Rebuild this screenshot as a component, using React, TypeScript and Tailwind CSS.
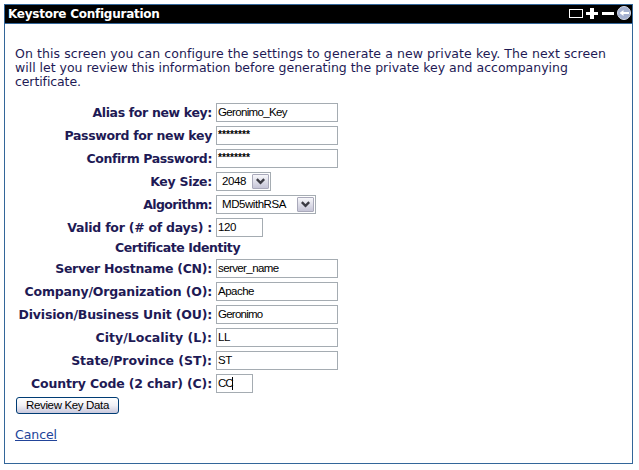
import type { ReactNode } from "react";

const ui = "font-['Liberation_Sans',Arial,sans-serif]";

function Row({ label, spacing, children }: { label: string; spacing: string; children: ReactNode }) {
  return (
    <div className="flex h-[19px] items-center">
      <label className="w-[197px] shrink-0 text-right font-bold leading-[19px]">
        <span className={`whitespace-nowrap ${spacing}`}>{label}</span>
      </label>
      <div className="ml-1 flex">{children}</div>
    </div>
  );
}

function Field({ value, width = "w-[122px]", spacing = "tracking-[-0.65px]", caret = false }: { value: string; width?: string; spacing?: string; caret?: boolean }) {
  return (
    <div className={`flex h-[19px] items-center border border-[#a5acb2] bg-white pl-px text-[11.5px] leading-[17px] text-black ${ui} ${width} ${spacing}`}>
      <span>{value}</span>
      {caret && <span className="h-[13px] w-px bg-black" />}
    </div>
  );
}

function Password() {
  return (
    <div className={`h-[19px] w-[122px] border border-[#a5acb2] bg-white pl-px text-[10.3px] font-bold leading-[16px] text-black ${ui}`}>
      ********
    </div>
  );
}

function Select({ value, width, spacing }: { value: string; width: string; spacing: string }) {
  return (
    <div className={`flex h-[19px] items-center justify-between border border-[#a5acb2] bg-white pl-[5px] pr-px text-[11.5px] text-black ${ui} ${width} ${spacing}`}>
      <span>{value}</span>
      <span className="flex h-[15px] w-[17px] items-center justify-center rounded-[1px] border border-[#a9a9ba] bg-gradient-to-b from-[#f7f7fa] to-[#c6c5d7]">
        <svg width="9" height="7" viewBox="0 0 9 7" fill="none">
          <path d="M.8 1.2 4.5 4.9 8.2 1.2" stroke="#3b3b43" strokeWidth="2.4" />
        </svg>
      </span>
    </div>
  );
}

export default function App() {
  return (
    <div className="h-[470px] w-[639px] bg-white pl-1 pt-1 font-['DejaVu_Sans',Verdana,sans-serif] text-[12.5px] text-[#1e1a55]">
      <div className="flex h-[460px] w-[629px] flex-col border border-[#336699]">
        <header className="flex h-[19px] shrink-0 items-center justify-between border-b border-[#336699] bg-black pl-[3px] text-white">
          <h1 className="text-[12px] font-bold leading-[18px] tracking-[-0.25px]">Keystore Configuration</h1>
          <svg width="64" height="18" viewBox="0 0 64 18" fill="none" shapeRendering="crispEdges">
            <rect x="1.5" y="4.5" width="13" height="8" stroke="#fff" />
            <path d="M18 7h12v3H18zM22 3h4v11h-4zM34 7h12v3H34z" fill="#fff" />
            <g shapeRendering="auto">
              <circle cx="56" cy="8" r="6.5" fill="#a4b0d0" stroke="#d5dbea" />
              <path d="M53 8h8" stroke="#fff" strokeWidth="2" />
              <path d="M55.5 5 51.5 8l4 3z" fill="#fff" />
            </g>
          </svg>
        </header>
        <main className="pl-[10px] pt-[23px]">
          <p className="whitespace-nowrap leading-[14px]">
            <span className="block tracking-[0.08px]">On this screen you can configure the settings to generate a new private key. The next screen</span>
            <span className="block tracking-[-0.01px]">will let you review this information before generating the private key and accompanying</span>
            <span className="block tracking-[-0.1px]">certificate.</span>
          </p>
          <form className="mt-[14px] flex flex-col gap-1">
            <Row label="Alias for new key:" spacing="tracking-[-0.35px]"><Field value="Geronimo_Key" /></Row>
            <Row label="Password for new key" spacing="tracking-[-0.33px]"><Password /></Row>
            <Row label="Confirm Password:" spacing="tracking-[-0.4px]"><Password /></Row>
            <Row label="Key Size:" spacing="tracking-[-0.3px]"><Select value="2048" width="w-[55px]" spacing="tracking-[-0.4px]" /></Row>
            <Row label="Algorithm:" spacing="tracking-[-0.6px]"><Select value="MD5withRSA" width="w-[100px]" spacing="tracking-[-0.45px]" /></Row>
            <Row label="Valid for (# of days) :" spacing="tracking-[-0.25px]"><Field value="120" width="w-[47px]" spacing="tracking-[-0.4px]" /></Row>
            <h2 className="h-[14px] w-[325px] text-center font-bold leading-[14px] tracking-[-0.43px]">Certificate Identity</h2>
            <Row label="Server Hostname (CN):" spacing="tracking-[-0.27px]"><Field value="server_name" spacing="tracking-[-0.6px]" /></Row>
            <Row label="Company/Organization (O):" spacing="tracking-[-0.18px]"><Field value="Apache" spacing="tracking-[-0.5px]" /></Row>
            <Row label="Division/Business Unit (OU):" spacing="tracking-[-0.18px]"><Field value="Geronimo" spacing="tracking-[-0.75px]" /></Row>
            <Row label="City/Locality (L):" spacing="tracking-[0.03px]"><Field value="LL" spacing="tracking-[-0.4px]" /></Row>
            <Row label="State/Province (ST):" spacing="tracking-[-0.05px]"><Field value="ST" spacing="tracking-[-0.5px]" /></Row>
            <Row label="Country Code (2 char) (C):" spacing="tracking-[-0.16px]"><Field value="CC" width="w-[37px]" spacing="tracking-[-1.1px]" caret /></Row>
            <button type="button" className={`ml-px h-[17px] w-[103px] rounded-[3px] border border-[#003c74] bg-gradient-to-b from-white via-[#f0f0f5] to-[#c9c8dc] text-[11.5px] leading-[15px] tracking-[-0.35px] text-black ${ui}`}>
              Review Key Data
            </button>
          </form>
          <a className="mt-[13px] inline-block leading-[16px] tracking-[-0.05px] text-[#224499] underline" href="#">Cancel</a>
        </main>
      </div>
    </div>
  );
}
